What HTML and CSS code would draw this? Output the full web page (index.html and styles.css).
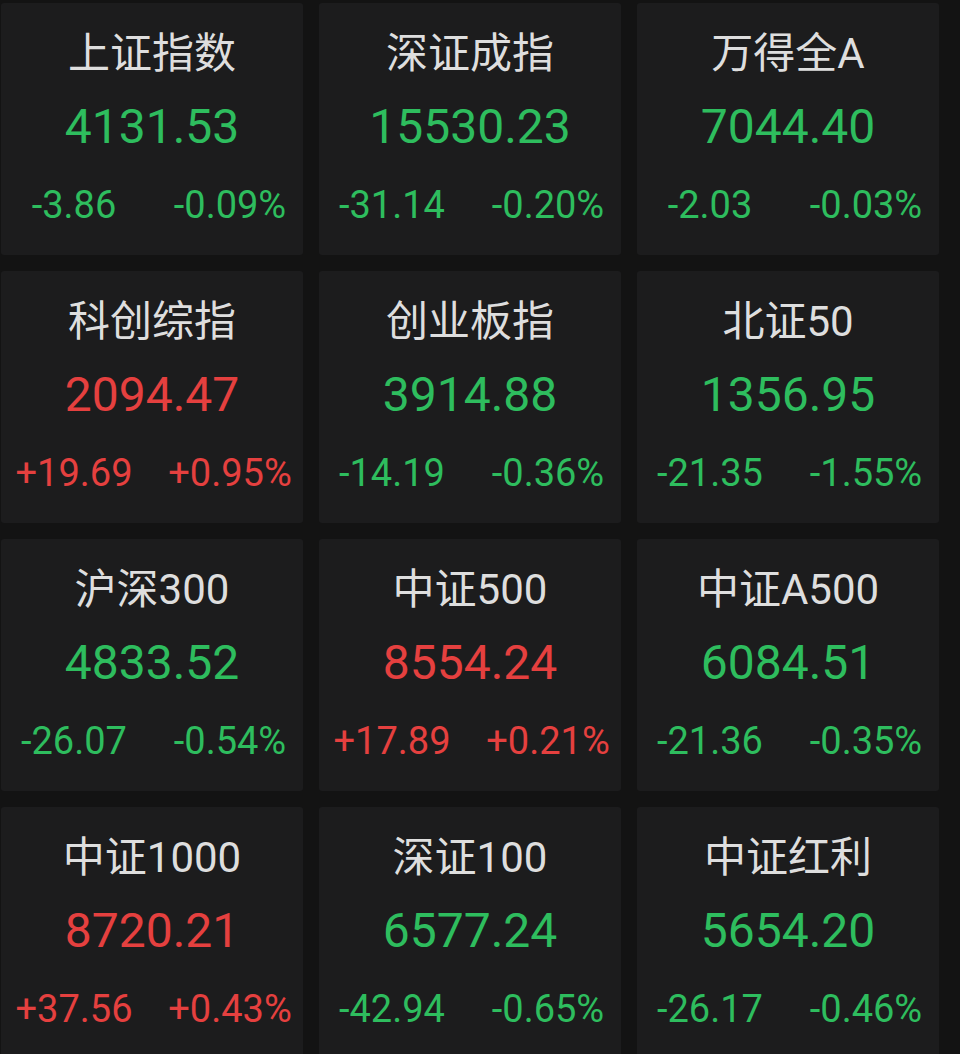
FILE: index.html
```html
<!DOCTYPE html>
<html lang="zh-CN">
<head>
  <meta charset="UTF-8">
  <meta name="viewport" content="width=device-width, initial-scale=1.0">
  <title>指数行情</title>
  <link rel="stylesheet" href="styles.css">
</head>
<body>

<!-- Index quote grid -->
<div class="index-grid">
  <div class="index-card down">
    <div class="index-name">上证指数</div>
    <div class="index-value">4131.53</div>
    <div class="index-change"><span>-3.86</span><span>-0.09%</span></div>
  </div>
  <div class="index-card down">
    <div class="index-name">深证成指</div>
    <div class="index-value">15530.23</div>
    <div class="index-change"><span>-31.14</span><span>-0.20%</span></div>
  </div>
  <div class="index-card down">
    <div class="index-name">万得全A</div>
    <div class="index-value">7044.40</div>
    <div class="index-change"><span>-2.03</span><span>-0.03%</span></div>
  </div>

  <div class="index-card up">
    <div class="index-name">科创综指</div>
    <div class="index-value">2094.47</div>
    <div class="index-change"><span>+19.69</span><span>+0.95%</span></div>
  </div>
  <div class="index-card down">
    <div class="index-name">创业板指</div>
    <div class="index-value">3914.88</div>
    <div class="index-change"><span>-14.19</span><span>-0.36%</span></div>
  </div>
  <div class="index-card down">
    <div class="index-name">北证50</div>
    <div class="index-value">1356.95</div>
    <div class="index-change"><span>-21.35</span><span>-1.55%</span></div>
  </div>

  <div class="index-card down">
    <div class="index-name">沪深300</div>
    <div class="index-value">4833.52</div>
    <div class="index-change"><span>-26.07</span><span>-0.54%</span></div>
  </div>
  <div class="index-card up">
    <div class="index-name">中证500</div>
    <div class="index-value">8554.24</div>
    <div class="index-change"><span>+17.89</span><span>+0.21%</span></div>
  </div>
  <div class="index-card down">
    <div class="index-name">中证A500</div>
    <div class="index-value">6084.51</div>
    <div class="index-change"><span>-21.36</span><span>-0.35%</span></div>
  </div>

  <div class="index-card up">
    <div class="index-name">中证1000</div>
    <div class="index-value">8720.21</div>
    <div class="index-change"><span>+37.56</span><span>+0.43%</span></div>
  </div>
  <div class="index-card down">
    <div class="index-name">深证100</div>
    <div class="index-value">6577.24</div>
    <div class="index-change"><span>-42.94</span><span>-0.65%</span></div>
  </div>
  <div class="index-card down">
    <div class="index-name">中证红利</div>
    <div class="index-value">5654.20</div>
    <div class="index-change"><span>-26.17</span><span>-0.46%</span></div>
  </div>
</div>

</body>
</html>
```

FILE: styles.css
```css
html,
body {
  margin: 0;
  height: 100%;
  overflow: hidden;
}

body {
  background-color: #131313;
  font-family: Roboto, "Noto Sans CJK SC", sans-serif;
}

.index-grid {
  display: grid;
  grid-template-columns: repeat(3, 302px);
  grid-auto-rows: 252px;
  gap: 16px;
  padding: 3px 0 0 1px;
}

.index-card {
  background-color: #1c1c1d;
  border-radius: 3px;
  display: flex;
  flex-direction: column;
  align-items: center;
  padding-top: 25px;
  box-sizing: border-box;
}

.index-name {
  font-size: 42px;
  line-height: 52px;
  color: #dedede;
}

.index-value {
  font-size: 48px;
  line-height: 56px;
  margin-top: 19px;
}

.index-change {
  display: grid;
  grid-template-columns: 146px 146px;
  column-gap: 10px;
  width: 100%;
  margin-top: 26px;
  font-size: 38px;
  line-height: 48px;
  text-align: center;
}

/* Rise red, fall green */
.up .index-value,
.up .index-change {
  color: #e5403f;
}

.down .index-value,
.down .index-change {
  color: #2ebd5e;
}
```
